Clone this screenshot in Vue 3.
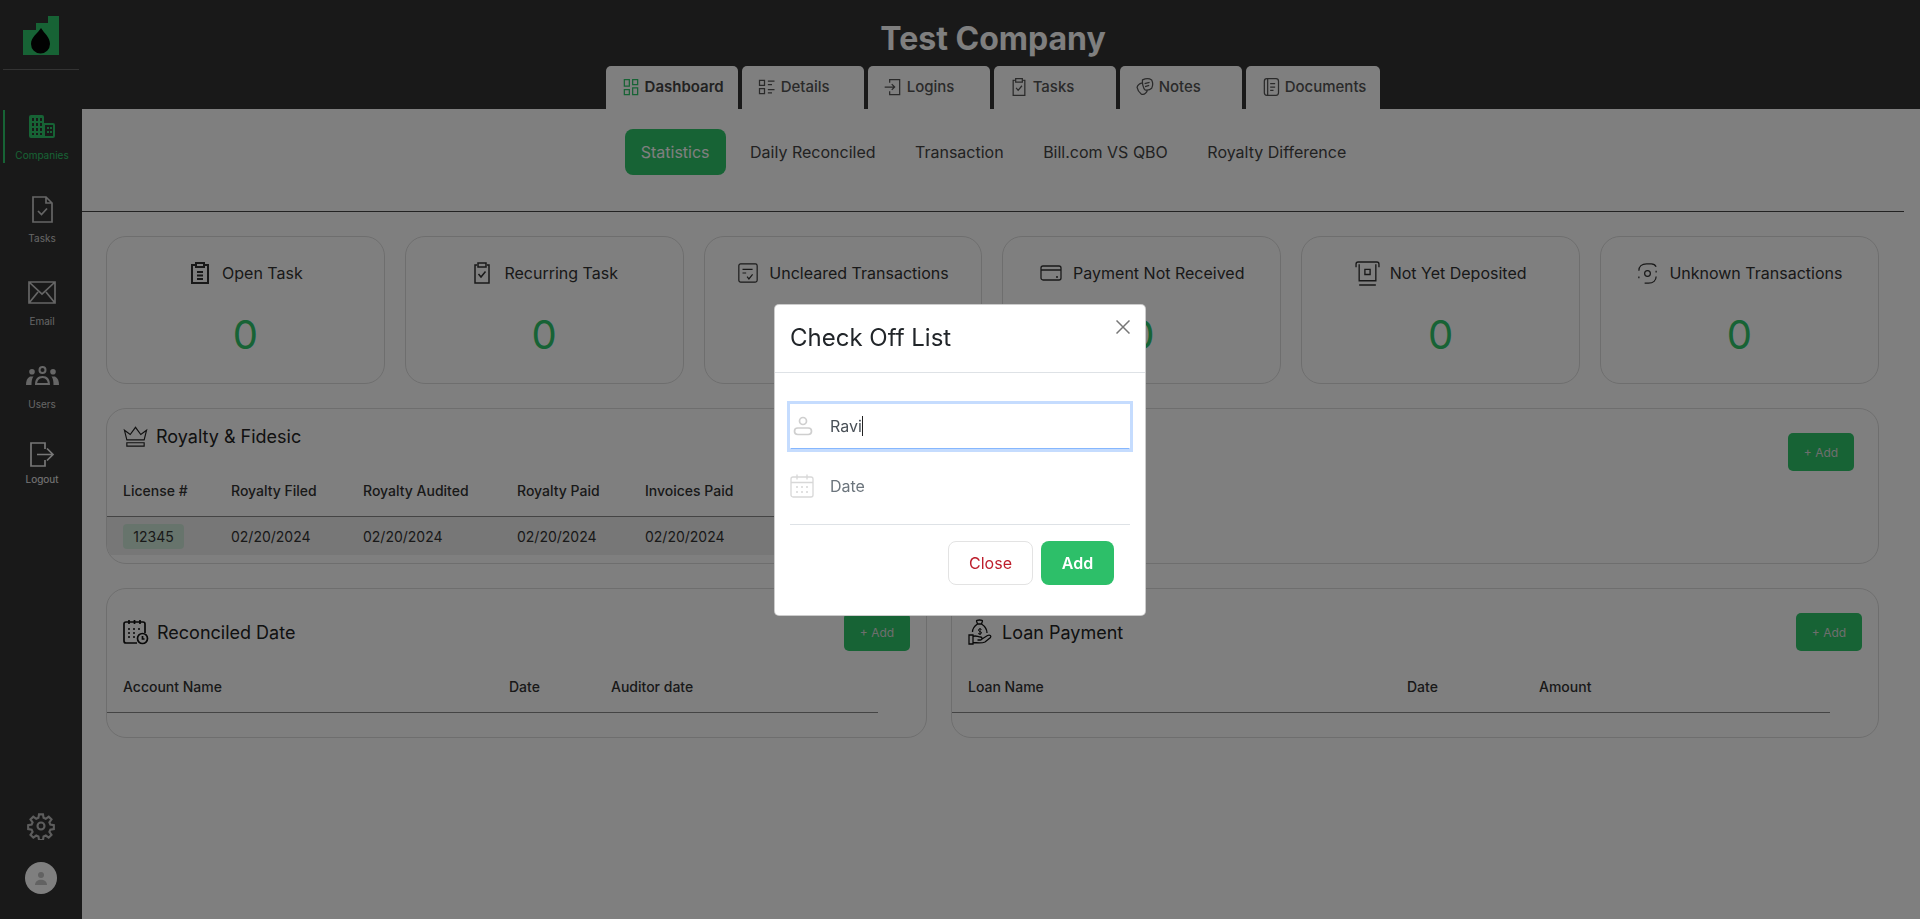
<template>
  <div class="page">
    <!-- sidebar -->
    <aside class="sidebar">
      <div class="logo">
        <svg width="36" height="39" viewBox="0 0 36 39">
          <path fill="#2ec66a" d="M0 14h13V7h12v7h0V0h11v39H0z" />
          <path fill="#050505" d="M18 12c3 5 9 9 9 16a9.500 9.500 0 0 1-19 0c0-7 7-11 10-16z" />
        </svg>
      </div>
      <nav class="side-nav">
        <a v-for="item in sideItems" :key="item.label" class="side-item" :class="item.cls">
          <span class="side-icon">
            <svg :width="item.w" :height="item.h" :viewBox="item.box" fill="none" stroke="currentColor" stroke-width="1.700">
              <path :d="item.d" />
              <path v-if="item.fill" :d="item.fill" :fill-rule="item.rule" fill="currentColor" stroke="none" />
            </svg>
          </span>
          <span class="side-label">{{ item.label }}</span>
        </a>
      </nav>
      <div class="side-bottom">
        <svg class="gear" width="28" height="28" viewBox="0 0 24 24" fill="none" stroke="currentColor" stroke-width="1.800">
          <circle cx="12" cy="12" r="3" />
          <path d="M10.300 2h3.400l.5 3 1.900.8 2.500-1.800 2.400 2.400-1.800 2.500.8 1.900 3 .5v3.400l-3 .5-.8 1.900 1.800 2.500-2.400 2.400-2.500-1.800-1.900.8-.5 3h-3.400l-.5-3-1.900-.8-2.500 1.800-2.400-2.400 1.800-2.500-.8-1.900-3-.5v-3.400l3-.5.8-1.900L3 6.400 5.400 4l2.500 1.800 1.900-.8z" />
        </svg>
        <div class="avatar">
          <svg width="14" height="14" viewBox="0 0 14 14">
            <circle cx="7" cy="4" r="3" fill="#c4c4c4" />
            <path d="M1 14c0-7 12-7 12 0z" fill="#c4c4c4" />
          </svg>
        </div>
      </div>
    </aside>

    <main class="main">
      <header class="top">
        <h1 class="company">Test Company</h1>
        <div class="tabs">
          <a v-for="tab in tabs" :key="tab.label" class="tab" :class="{ active: tab.active }">
            <svg width="20" height="20" viewBox="0 0 24 24" fill="none" stroke="currentColor" stroke-width="1.500">
              <path :d="tab.d" />
            </svg>
            <span>{{ tab.label }}</span>
          </a>
        </div>
      </header>

      <div class="subnav">
        <a v-for="(s, i) in subTabs" :key="s" class="sub-item" :class="{ active: i === 0 }">{{ s }}</a>
      </div>

      <section class="content">
        <div class="cards">
          <div v-for="card in cards" :key="card.label" class="card">
            <div class="card-title">
              <svg :width="card.size" :height="card.size" viewBox="0 0 24 24" fill="none" stroke="currentColor" :stroke-width="card.sw || 1.300">
                <path :d="card.d" />
              </svg>
              <span>{{ card.label }}</span>
            </div>
            <div class="card-value">0</div>
          </div>
        </div>

        <div class="panel royalty">
          <div class="royalty-main">
            <div class="panel-title">
              <svg width="25" height="24" viewBox="0 0 26 24" fill="none" stroke="#222" stroke-width="1.200">
                <path d="M4 16 1.500 6l6 4.500L13 3l5.500 7.500 6-4.500L22 16z" />
                <path d="M4 19h18v3.500H4z" />
              </svg>
              <span>Royalty &amp; Fidesic</span>
            </div>
            <div class="row head royalty-cols">
              <span v-for="h in royaltyHead" :key="h">{{ h }}</span>
            </div>
            <div class="row body royalty-cols">
              <span><b class="badge">12345</b></span>
              <span v-for="n in 4" :key="n">02/20/2024</span>
            </div>
          </div>
          <button class="add-btn">+ Add</button>
        </div>

        <div class="bottom">
          <div class="panel">
            <div class="panel-head">
              <div class="panel-title">
                <svg width="26" height="26" viewBox="0 0 26 26" fill="none" stroke="#111" stroke-width="1.700">
                  <path d="M14 24H3a2 2 0 0 1-2-2V5a2 2 0 0 1 2-2h17a2 2 0 0 1 2 2v9" />
                  <path d="M6 1v4M11.500 1v4M17 1v4" />
                  <path d="M5 10h2M10 10h2M15 10h2M5 14h2M10 14h2M5 18h2M10 18h2" />
                  <circle cx="19.500" cy="19.500" r="5" />
                  <path d="M19.500 17v3h2" />
                </svg>
                <span>Reconciled Date</span>
              </div>
              <button class="add-btn">+ Add</button>
            </div>
            <div class="row head left-cols">
              <span>Account Name</span><span>Date</span><span>Auditor date</span>
            </div>
          </div>
          <div class="panel">
            <div class="panel-head">
              <div class="panel-title">
                <svg width="26" height="26" viewBox="0 0 26 26" fill="none" stroke="#111" stroke-width="1.300">
                  <path d="M11.500 1c1.500 0 3 .5 3 1l-1 3h-4l-1-3c0-.5 1.500-1 3-1zM9.500 5c-3 2-5 5-5 8M13.500 5c3 2 5.500 5 5.500 9" />
                  <path d="M12 9v7M13.500 10.500c-1.500-1-3.500-.5-3 1s3.500 1 3 2.500-2.500 1-3.500.5" stroke-width="1" />
                  <path d="M1 16h4v9H1zM5 17.500c2.500-1.500 5 .5 7.500.5 2 0 2 3 0 3H9.500M14 20l5.500-3.500c2.500-1 4 .5 3 2L17 23c-3 1.500-8 1-12 .5" />
                </svg>
                <span>Loan Payment</span>
              </div>
              <button class="add-btn">+ Add</button>
            </div>
            <div class="row head right-cols">
              <span>Loan Name</span><span>Date</span><span>Amount</span>
            </div>
          </div>
        </div>
      </section>
    </main>

    <!-- modal over everything -->
    <div class="backdrop">
      <div class="modal">
        <div class="modal-head">
          <h5>Check Off List</h5>
          <svg class="close-x" width="14" height="14" viewBox="0 0 14 14" stroke="#777" stroke-width="1.500">
            <path d="M.5.500l13 13M13.500.500l-13 13" />
          </svg>
        </div>
        <div class="modal-body">
          <div class="field focus">
            <svg class="field-icon" width="20" height="20" viewBox="0 0 20 20" fill="none" stroke="#cfcfcf" stroke-width="1.700">
              <circle cx="10" cy="5" r="3.500" />
              <rect x="1.500" y="12" width="17" height="6.500" rx="3.250" />
            </svg>
            <span class="value">Ravi<i class="caret"></i></span>
          </div>
          <div class="field">
            <svg class="field-icon" width="24" height="24" viewBox="0 0 24 24" fill="none" stroke="#d8d8d8" stroke-width="1.300">
              <rect x="1" y="3" width="22" height="20" rx="2" />
              <path d="M1 8.500h22M7 .500v5M17 .500v5" />
              <path d="M6 13h2M11 13h2M16 13h2M6 18h2M11 18h2M16 18h2" stroke-width="1.500" />
            </svg>
            <span class="placeholder">Date</span>
          </div>
          <div class="modal-line"></div>
          <div class="actions">
            <button class="btn-close">Close</button>
            <button class="btn-add">Add</button>
          </div>
        </div>
      </div>
    </div>
  </div>
</template>

<script setup>
const clipCheck = 'M7 4H5v18h14V4h-2M8 2h8v4H8zM8.500 13l2.500 3 4.500-5.500'

const sideItems = [
  {
    label: 'Companies',
    cls: 'active',
    rule: 'evenodd',
    w: 26,
    h: 23,
    box: '0 0 26 23',
    d: '',
    fill: 'M2 0h11a2 2 0 0 1 2 2v6h9a2 2 0 0 1 2 2v11a2 2 0 0 1-2 2H2a2 2 0 0 1-2-2V2a2 2 0 0 1 2-2zM3 3v3h2V3zm4 0v3h2V3zm4 0v3h2V3zM3 8v3h2V8zm4 0v3h2V8zm4 0v3h2V8zM3 13v3h2v-3zm4 0v3h2v-3zm4 0v3h2v-3zM3 18v2h2v-2zm4 0v2h2v-2zm4 0v2h2v-2zM16 10v11h8V10zm2 2h2v2h-2zm3 0h2v2h-2zm-3 4h2v2h-2zm3 0h2v2h-2z'
  },
  {
    label: 'Tasks',
    w: 21,
    h: 27,
    box: '0 0 21 27',
    d: 'M1 1h13l6 6v19H1zM14 1v6h6M6 15l3.500 3.500L15 12.500'
  },
  {
    label: 'Email',
    w: 28,
    h: 23,
    box: '0 0 28 23',
    d: 'M1 1h26v21H1zM1 1l13 12L27 1M1 22l9-11M27 22l-9-11'
  },
  {
    label: 'Users',
    w: 33,
    h: 19,
    box: '0 0 33 19',
    d: '',
    fill: 'M16.500 0a4 4 0 1 1 0 8 4 4 0 0 1 0-8zm0 2a2 2 0 1 0 0 4 2 2 0 0 0 0-4zM6 3a2.800 2.800 0 1 1 0 5.600A2.800 2.800 0 0 1 6 3zm21 0a2.800 2.800 0 1 1 0 5.600A2.800 2.800 0 0 1 27 3zM16.500 10c5 0 7.500 3 7.500 9h-2c0-4-2-7-5.500-7S11 15 11 19H9c0-6 2.500-9 7.500-9zM4 10.500h3.500C6 12.500 5.500 15 5.500 19H0c0-4 1-7 4-8.500zm25 0c3 1.500 4 4.500 4 8.500h-5.500c0-4-.5-6.500-2-8.500zM11 17h11v2H11z'
  },
  {
    label: 'Logout',
    cls: 'logout',
    w: 25,
    h: 25,
    box: '0 0 25 25',
    d: 'M15 7V1H1v23h14v-6M7 12.500h16M17 6.500l6 6-6 6'
  }
]

const tabs = [
  { label: 'Dashboard', active: true, d: 'M4 3h6v8H4zM14 3h6v6h-6zM4 15h6v6H4zM14 13h6v8h-6z' },
  { label: 'Details', d: 'M3 4h6v6H3zM3 14h6v6H3zM13 5h8M13 9h5M13 15h8M13 19h5' },
  { label: 'Logins', d: 'M8 7V3h12v18H8v-4M2 12h12M10.500 8.500 14 12l-3.500 3.500' },
  { label: 'Tasks', d: clipCheck },
  { label: 'Notes', d: 'M9 3.500c3-1.500 8-2 11 0 1.500 3 1.500 7 0 10-2 2-5 2.500-8 2-2-2-3.500-8-3-12zM8.500 7C5 8 3 10 2.500 12.500c.5 3 2.500 6 5 8 3 1 6-1 7.500-4.500M11.500 8l6-1.500M12 11.500l5-1.500' },
  { label: 'Documents', d: 'M7 2h11a3 3 0 0 1 3 3v14a3 3 0 0 1-3 3H7a3 3 0 0 1-3-3V5a3 3 0 0 1 3-3zM8 2v20M11 8h6M11 12h6M11 16h4' }
]

const subTabs = ['Statistics', 'Daily Reconciled', 'Transaction', 'Bill.com VS QBO', 'Royalty Difference']

const cards = [
  { label: 'Open Task', size: 24, sw: 2, d: 'M7 4H4v18h16V4h-3M8 2h8v4H8zM9 11h6M9 14.500h6M9 18h6' },
  { label: 'Recurring Task', size: 24, sw: 1.500, d: clipCheck },
  { label: 'Uncleared Transactions', size: 22, d: 'M4 2h16a2 2 0 0 1 2 2v16a2 2 0 0 1-2 2H4a2 2 0 0 1-2-2V4a2 2 0 0 1 2-2zM6 8h11M6 12h4M11 16l2 2.500 4-5' },
  { label: 'Payment Not Received', size: 24, sw: 1.300, d: 'M4 5h16a2 2 0 0 1 2 2v10a2 2 0 0 1-2 2H4a2 2 0 0 1-2-2V7a2 2 0 0 1 2-2zM2 9h20M17 16h2' },
  { label: 'Not Yet Deposited', size: 25, d: 'M1 6V3a2 2 0 0 1 2-2h18a2 2 0 0 1 2 2v3M4 3v16h16V3M4 23h16M9.500 8h5v5h-5z' },
  { label: 'Unknown Transactions', size: 23, d: 'M3 9c0-4 3-7 8-7h5c2 0 4 1 5 3M21 15c0 4-3 7-8 7H9M12 9a3 3 0 1 0 0 6 3 3 0 0 0 0-6zM3 15v2M21 9v2' }
]

const royaltyHead = ['License #', 'Royalty Filed', 'Royalty Audited', 'Royalty Paid', 'Invoices Paid']
</script>

<style>
html, body {
  margin: 0;
  background: #fff;
}
</style>

<style scoped>
.page {
  display: flex;
  height: 919px;
  overflow: hidden;
  font-family: Inter, 'Liberation Sans', sans-serif;
  color: #212529;
}

/* sidebar */
.sidebar {
  width: 82px;
  flex: none;
  background: #333;
  color: #ddd;
  display: flex;
  flex-direction: column;
}

.logo {
  height: 53px;
  margin: 0 3px;
  padding-top: 16px;
  display: flex;
  justify-content: center;
  border-bottom: 1px solid #666;
}

.side-nav {
  margin-top: 40px;
  padding-left: 3px;
  display: flex;
  flex-direction: column;
  gap: 30px;
}

.side-item {
  height: 53px;
  display: flex;
  flex-direction: column;
  align-items: center;
  margin-right: 3px;
  border-left: 2px solid transparent;
  color: #ccc;
}

.side-item.active {
  border-left-color: #2ec66a;
  color: #2ec66a;
}

.side-item.logout {
  height: 49px;
  color: #eee;
}

.side-icon {
  flex: none;
  height: 33px;
  display: flex;
  align-items: center;
}

.logout .side-icon {
  height: 25px;
}

.side-label {
  flex: none;
  font-size: 10px;
  line-height: 24px;
}

.side-bottom {
  margin-top: auto;
  padding-bottom: 25px;
  display: flex;
  flex-direction: column;
  align-items: center;
  gap: 22px;
}

.gear {
  color: #bbb;
}

.avatar {
  width: 32px;
  height: 32px;
  border-radius: 50%;
  background: #fff;
  display: flex;
  align-items: center;
  justify-content: center;
}

/* header */
.main {
  flex: 1;
  min-width: 0;
}

.top {
  height: 109px;
  background: #333;
  padding-right: 16px;
  display: flex;
  flex-direction: column;
  align-items: center;
  justify-content: flex-end;
}

.company {
  margin: 0 0 5px;
  font-size: 32px;
  line-height: 44px;
  font-weight: 700;
  color: #fff;
}

.tabs {
  display: flex;
  gap: 4px;
}

.tab {
  min-width: 122px;
  height: 43px;
  box-sizing: border-box;
  padding: 0 14px 2px 15px;
  background: #fff;
  border-radius: 5px 5px 0 0;
  display: flex;
  align-items: center;
  gap: 4px;
  font-size: 15px;
  font-weight: 500;
  color: #555;
}

.tab.active {
  font-weight: 600;
  color: #444;
}

.tab.active svg {
  color: #2ec66a;
}

.subnav {
  width: 1822px;
  height: 103px;
  box-sizing: border-box;
  padding-top: 20px;
  border-bottom: 1px solid #444;
  display: flex;
  justify-content: center;
  align-items: flex-start;
  gap: 9.500px;
}

.sub-item {
  height: 46px;
  padding: 0 15px;
  border-radius: 8px;
  display: flex;
  align-items: center;
  font-size: 16px;
  color: #444;
}

.sub-item.active {
  padding: 0 16px;
  background: #2ec66a;
  color: #fff;
}

/* page content */
.content {
  padding: 24px 41px 0 24px;
}

.cards {
  display: grid;
  grid-template-columns: repeat(6, 278.800px);
  gap: 20px;
}

.card {
  height: 148px;
  box-sizing: border-box;
  padding-top: 24px;
  border: 1px solid #ddd;
  border-radius: 20px;
  text-align: center;
}

.card-title {
  height: 24px;
  display: flex;
  align-items: center;
  justify-content: center;
  gap: 10px;
  font-size: 16px;
  color: #333;
}

.card-value {
  margin-top: 26px;
  font-size: 40px;
  line-height: 48px;
  color: #2ec66a;
}

.panel {
  border: 1px solid #ddd;
  border-radius: 20px;
  box-sizing: border-box;
}

.royalty {
  height: 156px;
  margin-top: 24px;
  display: flex;
  justify-content: space-between;
  align-items: flex-start;
  padding-right: 24px;
  overflow: hidden;
}

.royalty-main {
  width: 800px;
}

.royalty-main .panel-title {
  height: 28px;
  margin: 13px 0 13px 16px;
}

.royalty .add-btn {
  margin-top: 24px;
}

.panel-title {
  display: flex;
  align-items: center;
  gap: 8px;
  font-size: 18px;
  font-weight: 400;
  color: #222;
}

.row {
  display: grid;
  align-items: center;
  padding-left: 16px;
  font-size: 14px;
}

.row.head {
  height: 54px;
  box-sizing: border-box;
  padding-top: 1px;
  border-bottom: 1px solid #888;
  font-weight: 500;
  color: #333;
}

.row.body {
  height: 38px;
  background: #eee;
  color: #333;
}

.royalty-cols {
  grid-template-columns: 108px 132px 154px 128px 1fr;
}

.left-cols {
  width: 771px;
  grid-template-columns: 386px 102px 1fr;
}

.right-cols {
  width: 878px;
  grid-template-columns: 439px 132px 1fr;
}

.badge {
  display: inline-block;
  width: 61px;
  height: 25px;
  line-height: 25px;
  text-align: center;
  border-radius: 4px;
  background: #cfe9d9;
  font-weight: 400;
}

.bottom {
  margin-top: 24px;
  display: grid;
  grid-template-columns: 821px 1fr;
  gap: 24px;
}

.bottom .panel {
  height: 150px;
}

.panel-head {
  display: flex;
  justify-content: space-between;
  align-items: center;
  padding: 24px 16px 0;
  margin-bottom: 8px;
}

.add-btn {
  width: 66px;
  height: 38px;
  border: 0;
  border-radius: 5px;
  background: #2ec66a;
  color: #ddd;
  font-family: inherit;
  font-size: 12px;
}

/* modal */
.backdrop {
  position: fixed;
  inset: 0;
  background: rgba(0, 0, 0, 0.5);
  display: flex;
  justify-content: center;
  align-items: flex-start;
  padding-top: 304px;
  box-sizing: border-box;
}

.modal {
  width: 372px;
  height: 312px;
  box-sizing: border-box;
  background: #fff;
  border-radius: 5px;
  border: 1px solid rgba(0, 0, 0, 0.2);
}

.modal-head {
  height: 68px;
  box-sizing: border-box;
  padding: 0 15px;
  border-bottom: 1px solid #dee2e6;
  display: flex;
  justify-content: space-between;
}

.modal-head h5 {
  margin: 16px 0 0;
  font-size: 24px;
  line-height: 34px;
  font-weight: 400;
  color: #212529;
}

.close-x {
  margin-top: 15px;
}

.modal-body {
  padding: 31px 15px 0;
}

.field {
  height: 45px;
  box-sizing: border-box;
  padding-bottom: 2px;
  display: flex;
  align-items: center;
  font-size: 16px;
  margin-bottom: 15px;
}

.field.focus {
  border: 1px solid #fff;
  border-bottom-color: #86b7fe;
  box-shadow: 0 0 0 3px #c5dcfe;
}

.field-icon {
  flex: none;
}

.field.focus .field-icon {
  margin-left: 2px;
  margin-right: 17px;
}

.field:not(.focus) .field-icon {
  margin-right: 16px;
}

.value {
  color: #495057;
}

.caret {
  display: inline-block;
  width: 1px;
  height: 20px;
  background: #222;
  vertical-align: -4px;
}

.placeholder {
  color: #6c757d;
}

.modal-line {
  height: 1px;
  background: #dee2e6;
  margin-top: 12px;
}

.actions {
  margin-top: 16px;
  display: flex;
  justify-content: flex-end;
  gap: 8px;
  padding-right: 16px;
}

.actions button {
  height: 44px;
  border-radius: 8px;
  font-family: inherit;
  font-size: 16px;
}

.btn-close {
  width: 85px;
  background: #fff;
  border: 1px solid #e3e3e3;
  color: #bd1e2c;
}

.btn-add {
  width: 73px;
  background: #2dbf69;
  border: 0;
  color: #fff;
  font-weight: 600;
}
</style>
